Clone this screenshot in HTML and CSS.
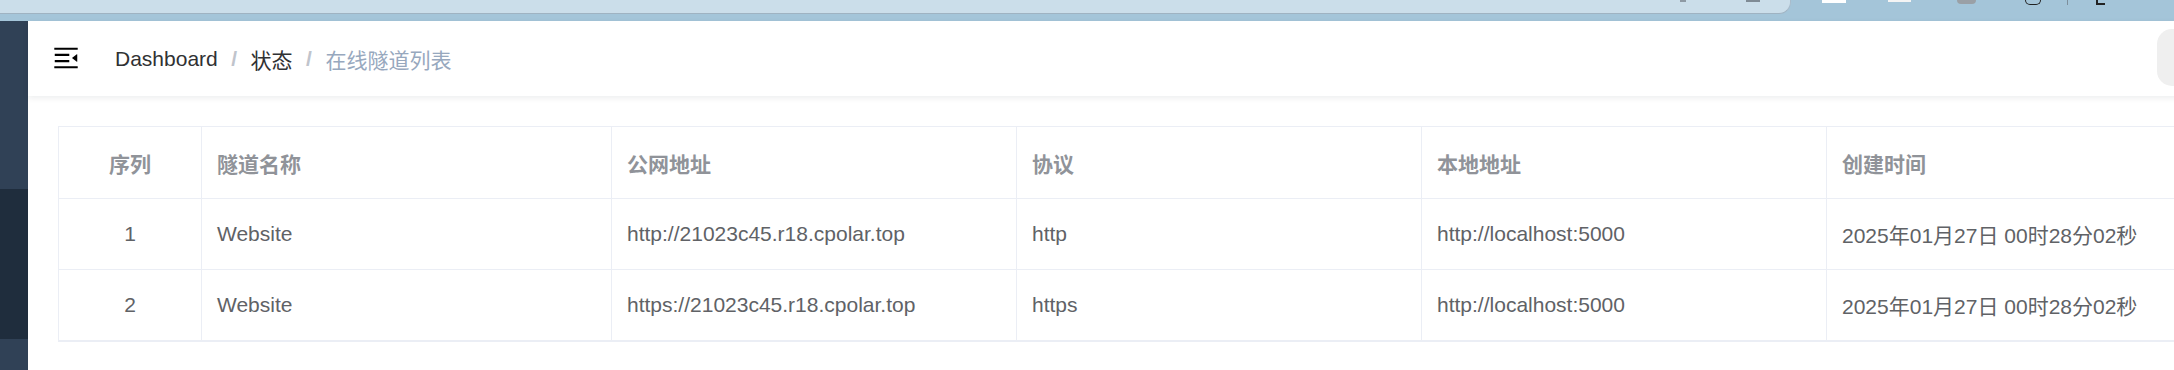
FILE: index.html
```html
<!DOCTYPE html>
<html lang="zh-CN">
<head>
<meta charset="utf-8">
<title>在线隧道列表</title>
<link rel="stylesheet" href="styles.css">
</head>
<body>
<div class="chrome">
  <div class="omnibox">
    <span class="ob-mark ob-a"></span>
    <span class="ob-mark ob-b"></span>
  </div>
  <div class="toolbar">
    <span class="tb tb-white1"></span>
    <span class="tb tb-white2"></span>
    <span class="tb tb-circle"></span>
    <span class="tb tb-dark1"></span>
    <span class="tb tb-divider"></span>
    <span class="tb tb-dark2"></span>
  </div>
</div>
<div class="app">
  <aside class="sidebar">
    <div class="sb-top"></div>
    <div class="sb-sub"></div>
    <div class="sb-bottom"></div>
  </aside>
  <main class="main">
    <header class="navbar">
      <div class="hamburger">
        <svg class="hamburger-icon" viewBox="0 0 1024 1024" width="30" height="30"><path d="M408 442h480c4.4 0 8-3.6 8-8v-56c0-4.4-3.6-8-8-8H408c-4.4 0-8 3.6-8 8v56c0 4.4 3.6 8 8 8zm-8 204c0 4.4 3.6 8 8 8h480c4.4 0 8-3.6 8-8v-56c0-4.4-3.6-8-8-8H408c-4.4 0-8 3.6-8 8v56zm504-486H120c-4.4 0-8 3.6-8 8v56c0 4.4 3.6 8 8 8h784c4.4 0 8-3.6 8-8v-56c0-4.4-3.6-8-8-8zm0 632H120c-4.4 0-8 3.6-8 8v56c0 4.4 3.6 8 8 8h784c4.4 0 8-3.6 8-8v-56c0-4.4-3.6-8-8-8zM142.4 642.1L298.7 519a8.84 8.84 0 0 0 0-13.9L142.4 381.9c-5.8-4.6-14.4-.5-14.4 6.9v246.3a8.8 8.8 0 0 0 14.4 7z"/></svg>
      </div>
      <nav class="breadcrumb">
        <span class="bc-item">Dashboard</span>
        <span class="bc-sep">/</span>
        <span class="bc-item">状态</span>
        <span class="bc-sep">/</span>
        <span class="bc-item bc-current">在线隧道列表</span>
      </nav>
      <div class="right-menu">
        <div class="avatar"></div>
      </div>
    </header>
    <section class="content">
      <div class="table">
        <div class="cell head center">序列</div>
        <div class="cell head">隧道名称</div>
        <div class="cell head">公网地址</div>
        <div class="cell head">协议</div>
        <div class="cell head">本地地址</div>
        <div class="cell head">创建时间</div>

        <div class="cell center">1</div>
        <div class="cell">Website</div>
        <div class="cell">http://21023c45.r18.cpolar.top</div>
        <div class="cell">http</div>
        <div class="cell">http://localhost:5000</div>
        <div class="cell">2025年01月27日 00时28分02秒</div>

        <div class="cell center last">2</div>
        <div class="cell last">Website</div>
        <div class="cell last">https://21023c45.r18.cpolar.top</div>
        <div class="cell last">https</div>
        <div class="cell last">http://localhost:5000</div>
        <div class="cell last">2025年01月27日 00时28分02秒</div>
      </div>
    </section>
  </main>
</div>
</body>
</html>
```
FILE: styles.css
```css
html, body {
  margin: 0;
  padding: 0;
}
body {
  width: 2174px;
  height: 370px;
  overflow: hidden;
  background: #ffffff;
  font-family: "Liberation Sans", "Noto Sans CJK SC", sans-serif;
}

/* fake browser chrome strip */
.chrome {
  height: 21px;
  width: 2300px;
  background: #a4c5d9;
  display: flex;
  align-items: flex-start;
}
.omnibox {
  width: 1790px;
  height: 13px;
  background: #cbdeea;
  border-bottom: 1px solid #9fb3c2;
  border-right: 1px solid #a9bccb;
  border-bottom-right-radius: 12px;
  box-sizing: content-box;
  display: flex;
  align-items: flex-start;
}
.ob-mark {
  display: block;
  height: 2px;
  background: #8e9aa4;
}
.ob-a {
  width: 6px;
  margin-left: 1680px;
}
.ob-b {
  width: 14px;
  margin-left: 60px;
  background: #7f8b95;
}
.toolbar {
  display: flex;
  align-items: flex-start;
  margin-left: 31px;
}
.tb {
  display: block;
}
.tb-white1 {
  width: 24px;
  height: 3px;
  background: #ffffff;
}
.tb-white2 {
  width: 23px;
  height: 2px;
  background: #f4f4f4;
  margin-left: 42px;
}
.tb-circle {
  width: 19px;
  height: 4px;
  background: #9aa0a6;
  border-radius: 0 0 10px 10px;
  margin-left: 46px;
}
.tb-dark1 {
  width: 14px;
  height: 4px;
  border: 1px solid #222;
  border-top: none;
  border-radius: 0 0 6px 6px;
  margin-left: 49px;
}
.tb-divider {
  width: 1px;
  height: 5px;
  background: #7d8f9c;
  margin-left: 26px;
}
.tb-dark2 {
  width: 7px;
  height: 3px;
  border-left: 2px solid #222;
  border-bottom: 2px solid #222;
  margin-left: 28px;
}

/* app layout */
.app {
  display: flex;
  width: 2300px;
  height: 349px;
}
.sidebar {
  width: 28px;
  flex: 0 0 28px;
  display: flex;
  flex-direction: column;
}
.sb-top {
  height: 168px;
  flex-shrink: 0;
  background: #304156;
}
.sb-sub {
  height: 150px;
  flex-shrink: 0;
  background: #1f2d3d;
}
.sb-bottom {
  flex: 1;
  background: #304156;
}
.main {
  flex: 1;
  display: flex;
  flex-direction: column;
  min-height: 0;
}

/* navbar */
.navbar {
  height: 75px;
  flex-shrink: 0;
  display: flex;
  align-items: center;
  background: #ffffff;
  box-shadow: 0 1.5px 6px rgba(0, 21, 41, 0.08);
  position: relative;
  z-index: 1;
}
.hamburger {
  padding: 0 22.5px 2px 22.5px;
  display: flex;
  align-items: center;
}
.hamburger-icon {
  display: block;
  width: 30px;
  height: 30px;
  fill: #000000;
  transform: rotate(180deg);
}
.breadcrumb {
  margin-left: 12px;
  font-size: 21px;
  display: flex;
  align-items: center;
  color: #303133;
}
.bc-sep {
  margin: 0 13.5px;
  font-weight: 700;
  color: #c0c4cc;
}
.bc-current {
  color: #97a8be;
}
.right-menu {
  margin-left: auto;
  margin-right: 83px;
  display: flex;
  align-items: center;
}
.avatar {
  width: 60px;
  height: 57px;
  border-radius: 15px;
  background: #efefef;
  margin-top: -3px;
}

/* table */
.content {
  flex-shrink: 0;
  padding: 30px;
}
.table {
  display: grid;
  grid-template-columns: 143px 410px 405px 405px 405px 405px;
  width: max-content;
  border-left: 1px solid #ebeef5;
  border-top: 1px solid #ebeef5;
  font-size: 21px;
  color: #606266;
}
.cell {
  height: 70px;
  box-sizing: content-box;
  border-right: 1px solid #ebeef5;
  border-bottom: 1px solid #ebeef5;
  padding: 0 15px;
  display: flex;
  align-items: center;
  white-space: nowrap;
  overflow: hidden;
}
.cell.head {
  height: 71px;
  color: #909399;
  font-weight: 700;
}
.cell.center {
  justify-content: center;
}
.cell.last {
  border-bottom: 2px solid #ebeef5;
}
```
